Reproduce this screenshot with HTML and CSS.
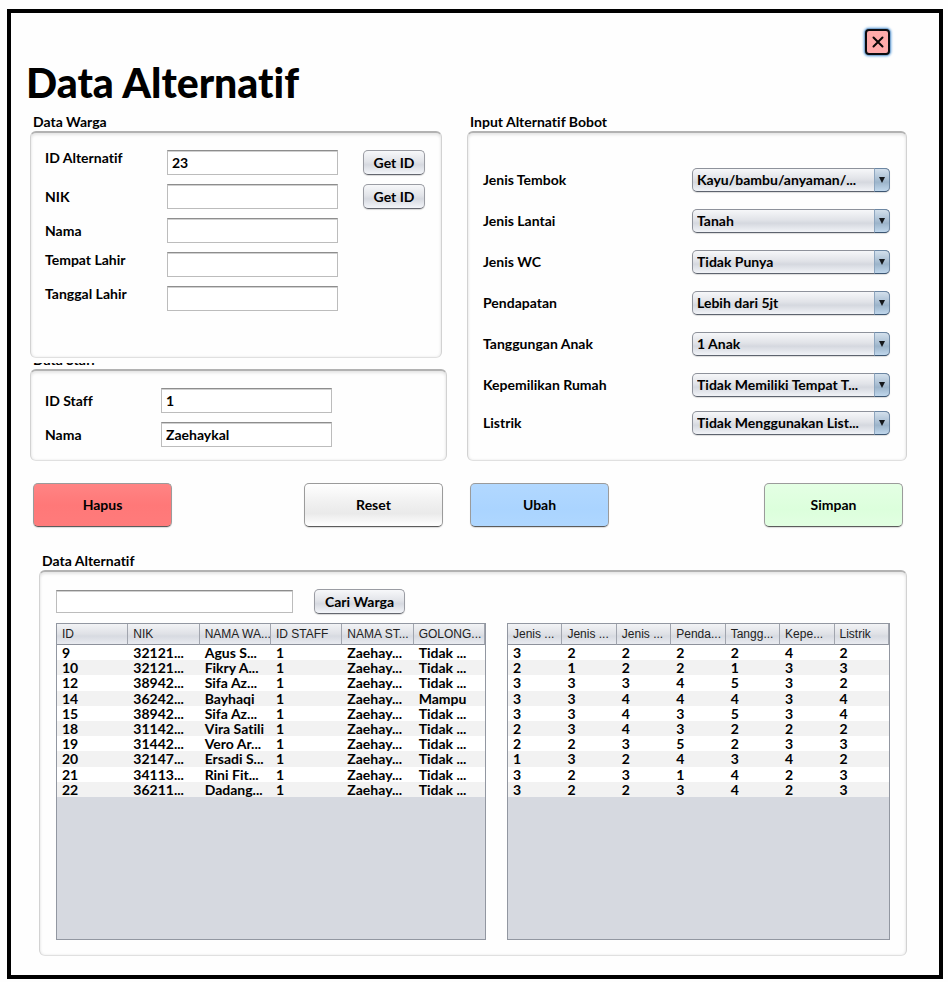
FILE: index.html
```html
<!DOCTYPE html>
<html lang="id">
<head>
<meta charset="utf-8">
<meta name="viewport" content="width=device-width, initial-scale=1">
<title>Data Alternatif</title>
<link rel="stylesheet" href="styles.css">
</head>
<body>
<main class="window">
  <div class="topbar">
    <button class="close" type="button" aria-label="Tutup">
      <svg viewBox="0 0 12 12" width="12" height="12" aria-hidden="true"><path d="M1.5 1.5L10.5 10.5M10.5 1.5L1.5 10.5" fill="none" stroke="#0a0606" stroke-width="2" stroke-linecap="round"/></svg>
    </button>
  </div>
  <h1 class="title">Data Alternatif</h1>

  <div class="columns">
    <div class="stack">
      <fieldset class="group group-warga">
        <legend>Data Warga</legend>
        <div class="panel form-warga">
          <label class="raised" for="id-alternatif">ID Alternatif</label>
          <input class="field" id="id-alternatif" type="text" value="23">
          <button class="btn" type="button">Get ID</button>
          <label for="nik">NIK</label>
          <input class="field" id="nik" type="text">
          <button class="btn" type="button">Get ID</button>
          <label for="nama">Nama</label>
          <input class="field" id="nama" type="text">
          <label class="raised" for="tempat">Tempat Lahir</label>
          <input class="field" id="tempat" type="text">
          <label class="raised" for="tanggal">Tanggal Lahir</label>
          <input class="field" id="tanggal" type="text">
        </div>
      </fieldset>
      <fieldset class="group group-staff">
        <legend>Data Staff</legend>
        <div class="panel form-staff">
          <label for="id-staff">ID Staff</label>
          <input class="field" id="id-staff" type="text" value="1">
          <label for="nama-staff">Nama</label>
          <input class="field" id="nama-staff" type="text" value="Zaehaykal">
        </div>
      </fieldset>
    </div>

    <fieldset class="group group-bobot">
      <legend>Input Alternatif Bobot</legend>
      <div class="panel form-bobot">
        <label for="tembok">Jenis Tembok</label>
        <span class="combo"><select id="tembok"><option>Kayu/bambu/anyaman/...</option></select></span>
        <label for="lantai">Jenis Lantai</label>
        <span class="combo"><select id="lantai"><option>Tanah</option></select></span>
        <label for="wc">Jenis WC</label>
        <span class="combo"><select id="wc"><option>Tidak Punya</option></select></span>
        <label for="pendapatan">Pendapatan</label>
        <span class="combo"><select id="pendapatan"><option>Lebih dari 5jt</option></select></span>
        <label for="anak">Tanggungan Anak</label>
        <span class="combo"><select id="anak"><option>1 Anak</option></select></span>
        <label for="rumah">Kepemilikan Rumah</label>
        <span class="combo"><select id="rumah"><option>Tidak Memiliki Tempat T...</option></select></span>
        <label for="listrik">Listrik</label>
        <span class="combo"><select id="listrik"><option>Tidak Menggunakan List...</option></select></span>
      </div>
    </fieldset>
  </div>

  <div class="actions">
    <div class="action-pair">
      <button class="action red" type="button">Hapus</button>
      <button class="action plain" type="button">Reset</button>
    </div>
    <div class="action-pair">
      <button class="action blue" type="button">Ubah</button>
      <button class="action green" type="button">Simpan</button>
    </div>
  </div>

  <fieldset class="group group-data">
    <legend>Data Alternatif</legend>
    <div class="panel data">
      <div class="search">
        <input class="field" type="text" aria-label="Cari Warga">
        <button class="btn" type="button">Cari Warga</button>
      </div>
      <div class="tables">
        <div class="table-box">
          <table>
            <thead><tr><th>ID</th><th>NIK</th><th>NAMA WA...</th><th>ID STAFF</th><th>NAMA ST...</th><th>GOLONG...</th></tr></thead>
            <tbody>
              <tr><td>9</td><td>32121...</td><td>Agus S...</td><td>1</td><td>Zaehay...</td><td>Tidak ...</td></tr>
              <tr><td>10</td><td>32121...</td><td>Fikry A...</td><td>1</td><td>Zaehay...</td><td>Tidak ...</td></tr>
              <tr><td>12</td><td>38942...</td><td>Sifa Az...</td><td>1</td><td>Zaehay...</td><td>Tidak ...</td></tr>
              <tr><td>14</td><td>36242...</td><td>Bayhaqi</td><td>1</td><td>Zaehay...</td><td>Mampu</td></tr>
              <tr><td>15</td><td>38942...</td><td>Sifa Az...</td><td>1</td><td>Zaehay...</td><td>Tidak ...</td></tr>
              <tr><td>18</td><td>31142...</td><td>Vira Satili</td><td>1</td><td>Zaehay...</td><td>Tidak ...</td></tr>
              <tr><td>19</td><td>31442...</td><td>Vero Ar...</td><td>1</td><td>Zaehay...</td><td>Tidak ...</td></tr>
              <tr><td>20</td><td>32147...</td><td>Ersadi S...</td><td>1</td><td>Zaehay...</td><td>Tidak ...</td></tr>
              <tr><td>21</td><td>34113...</td><td>Rini Fit...</td><td>1</td><td>Zaehay...</td><td>Tidak ...</td></tr>
              <tr><td>22</td><td>36211...</td><td>Dadang...</td><td>1</td><td>Zaehay...</td><td>Tidak ...</td></tr>
            </tbody>
          </table>
        </div>
        <div class="table-box">
          <table>
            <thead><tr><th>Jenis ...</th><th>Jenis ...</th><th>Jenis ...</th><th>Penda...</th><th>Tangg...</th><th>Kepe...</th><th>Listrik</th></tr></thead>
            <tbody>
              <tr><td>3</td><td>2</td><td>2</td><td>2</td><td>2</td><td>4</td><td>2</td></tr>
              <tr><td>2</td><td>1</td><td>2</td><td>2</td><td>1</td><td>3</td><td>3</td></tr>
              <tr><td>3</td><td>3</td><td>3</td><td>4</td><td>5</td><td>3</td><td>2</td></tr>
              <tr><td>3</td><td>3</td><td>4</td><td>4</td><td>4</td><td>3</td><td>4</td></tr>
              <tr><td>3</td><td>3</td><td>4</td><td>3</td><td>5</td><td>3</td><td>4</td></tr>
              <tr><td>2</td><td>3</td><td>4</td><td>3</td><td>2</td><td>2</td><td>2</td></tr>
              <tr><td>2</td><td>2</td><td>3</td><td>5</td><td>2</td><td>3</td><td>3</td></tr>
              <tr><td>1</td><td>3</td><td>2</td><td>4</td><td>3</td><td>4</td><td>2</td></tr>
              <tr><td>3</td><td>2</td><td>3</td><td>1</td><td>4</td><td>2</td><td>3</td></tr>
              <tr><td>3</td><td>2</td><td>2</td><td>3</td><td>4</td><td>2</td><td>3</td></tr>
            </tbody>
          </table>
        </div>
      </div>
    </div>
  </fieldset>
</main>
</body>
</html>
```
FILE: styles.css
```css
*, *::before { box-sizing: border-box; }

body {
  margin: 0;
  padding: 9px 5px 4px 7px;
  background: #fefefe;
  color: #000;
  font: 700 14px/16px Lato, "Liberation Sans", sans-serif;
  font-variant-ligatures: none;
}

button, input, select { font: inherit; color: inherit; }

.window {
  border: 4px solid #000;
  padding: 16px 32px 19px 19px;
}

.topbar {
  display: flex;
  justify-content: flex-end;
  padding-right: 17px;
}

.close {
  display: grid;
  place-items: center;
  width: 25px;
  height: 26px;
  padding: 0;
  border: 2px solid #0b0b0f;
  border-radius: 4px;
  background: #ffaaaa;
  box-shadow: 0 0 0 1px #7fa9d2, 0 0 2px 2px #a9cdee;
}

.title {
  margin: 4px 0 7px -4px;
  font-size: 41px;
  line-height: 48px;
  font-weight: 900;
}

.columns, .actions {
  display: grid;
  grid-template-columns: 417fr 440fr;
  column-gap: 20px;
}

.stack { display: flex; flex-direction: column; }

.group {
  min-width: 0;
  margin: 0;
  padding: 0;
  border: 0;
}

.group legend {
  padding: 0 0 1px 3px;
}

.panel {
  border: 1px solid #d2d2d2;
  border-top: 2px solid #b2b2b2;
  border-bottom-color: #e0e0e0;
  border-radius: 6px;
  box-shadow: inset 0 2px 3px #e6e6e6, inset 0 0 3px #ececec;
}

/* The upper group overlaps the title of the group below it. */
.group-warga {
  position: relative;
  z-index: 1;
  margin-right: 5px;
  padding-bottom: 5px;
  background: #fefefe;
}

.group-staff { margin-top: -11px; }

.form-warga, .form-staff {
  display: grid;
  row-gap: 9px;
  grid-auto-rows: 25px;
  align-items: center;
}

.form-warga {
  grid-template-columns: 122px 1fr 62px;
  padding: 17px 16px 46px 14px;
}

.form-warga label { grid-column: 1; }
.form-warga .field { margin-right: 25px; }
.raised { align-self: start; }

.form-staff {
  grid-template-columns: 116px 1fr;
  padding: 17px 114px 13px 14px;
}

.group-bobot { display: flex; flex-direction: column; }

.form-bobot {
  display: grid;
  grid-template-columns: 1fr 198px;
  grid-template-rows: repeat(5, 41px) 38px 24px;
  padding: 35px 16px 25px 15px;
}

.form-bobot label { line-height: 24px; }

.field {
  width: auto;
  min-width: 0;
  height: 25px;
  padding: 0 4px;
  border: 1px solid #bcbcbc;
  border-top-color: #8d8d8d;
  border-radius: 0;
  background: #fff;
  box-shadow: inset 0 1px 0 #d0d0d0;
}

.btn {
  height: 25px;
  padding: 0;
  border: 1px solid #9a9ca3;
  border-bottom-color: #63666e;
  border-radius: 5px;
  background: linear-gradient(#f7f8fa, #e2e4e9 45%, #d6d9e0 60%, #f3f5f9);
  box-shadow: 0 1px 1px #d9d9d9;
}

.combo {
  position: relative;
  height: 24px;
}

.combo select {
  display: block;
  appearance: none;
  width: 100%;
  height: 24px;
  margin: 0;
  padding: 0 16px 0 4px;
  border: 1px solid #8e929b;
  border-bottom-color: #5d636e;
  border-radius: 5px;
  background: linear-gradient(#f6f7f9, #e1e3e8 45%, #d5d8df 60%, #f1f3f7);
  box-shadow: 0 1px 1px #dcdcdc;
}

.combo::before {
  content: "";
  position: absolute;
  top: 0;
  right: 0;
  width: 16px;
  height: 24px;
  border: 1px solid #6d87a3;
  border-left-color: #8ea6bf;
  border-bottom-color: #3c5672;
  border-radius: 0 5px 5px 0;
  background: linear-gradient(#d3e0ec, #abc0d4 45%, #9cb4ca 60%, #c0d7ec);
  pointer-events: none;
}

.combo::after {
  content: "";
  position: absolute;
  top: 9px;
  right: 5px;
  border: solid transparent;
  border-width: 6px 3px 0;
  border-top-color: #15181c;
  pointer-events: none;
}

.actions { padding-top: 22px; }

.action-pair {
  display: flex;
  justify-content: space-between;
  padding: 0 4px 0 3px;
}

.action {
  width: 139px;
  height: 44px;
  padding: 0;
  border: 1px solid #9b9b9b;
  border-bottom-color: #5c5c5c;
  border-radius: 5px;
  box-shadow: 0 1px 1px #dcdcdc;
}

.red { background: linear-gradient(#ff8484, #ff7878 50%, #ff7b7b); }
.plain { background: linear-gradient(#fff, #f0f0f0 45%, #eaeaea 70%, #fff); }
.blue { background: linear-gradient(#b2d8ff, #aad4ff 60%, #afd7ff); }
.green { background: linear-gradient(#e4ffe4, #dcffdc 60%, #e2ffe2); }

.group-data {
  margin: 26px 0 0 9px;
}

.data { padding: 17px 16px 15px; }

.search {
  display: flex;
  align-items: center;
  gap: 21px;
  margin-bottom: 9px;
}

.search .field { width: 237px; height: 23px; }
.search .btn { width: 91px; }

.tables {
  display: grid;
  grid-template-columns: 430fr 383fr;
  gap: 21px;
}

.table-box {
  min-height: 317px;
  border: 1px solid #9297a1;
  background: #d6d9e0;
}

table {
  width: 100%;
  height: 173px;
  table-layout: fixed;
  border-collapse: separate;
  border-spacing: 0;
}

th, td {
  overflow: hidden;
  padding: 0 0 0 5px;
  text-align: left;
  white-space: nowrap;
}

th {
  height: 21px;
  border-right: 1px solid #a1a5ae;
  border-bottom: 1px solid #8d919b;
  background: linear-gradient(#f2f3f5, #dfe1e6 50%, #d7dae1 60%, #e9ebf0);
  color: #222;
  font: 400 12px/18px "Liberation Sans", sans-serif;
}

td { line-height: 15px; }

tbody tr { background: #fff; }
tbody tr:nth-child(even) { background: #f2f2f2; }
```
